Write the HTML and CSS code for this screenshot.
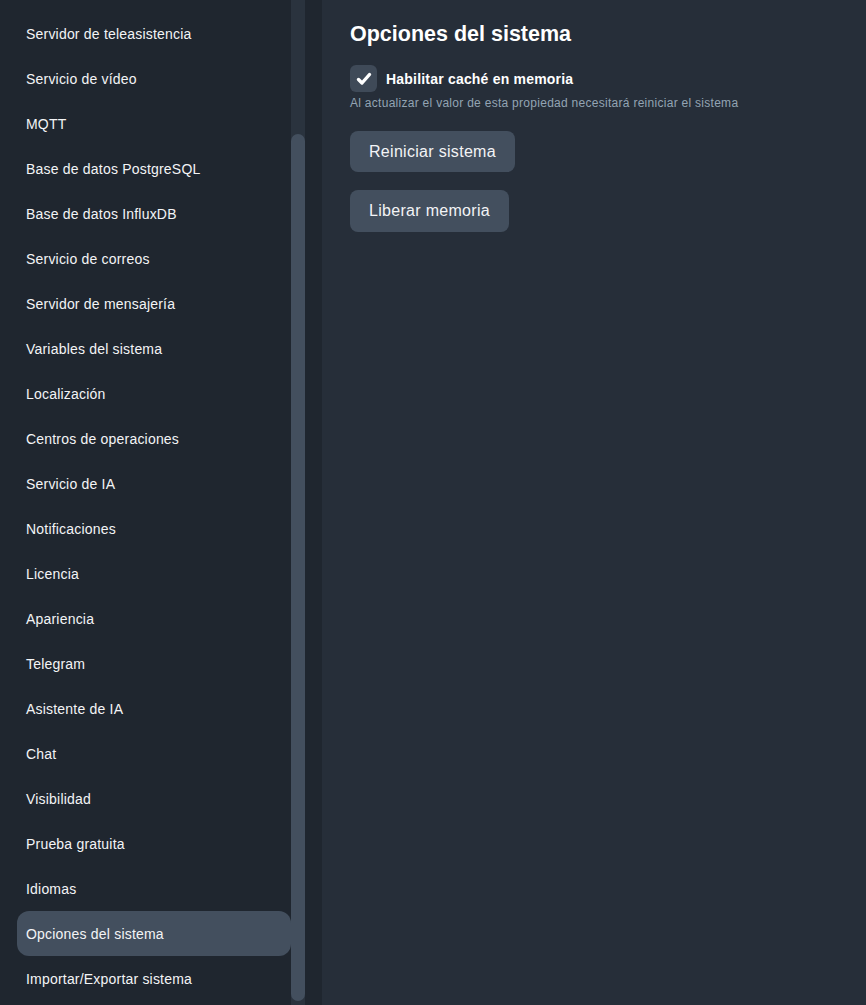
FILE: index.html
```html
<!DOCTYPE html>
<html lang="es">
<head>
<meta charset="utf-8">
<title>Opciones del sistema</title>
<link rel="stylesheet" href="styles.css">
</head>
<body>
<div class="app">
  <aside class="sidebar">
    <nav class="nav">
      <a class="nav-item">Servidor de teleasistencia</a>
      <a class="nav-item">Servicio de vídeo</a>
      <a class="nav-item">MQTT</a>
      <a class="nav-item">Base de datos PostgreSQL</a>
      <a class="nav-item">Base de datos InfluxDB</a>
      <a class="nav-item">Servicio de correos</a>
      <a class="nav-item">Servidor de mensajería</a>
      <a class="nav-item">Variables del sistema</a>
      <a class="nav-item">Localización</a>
      <a class="nav-item">Centros de operaciones</a>
      <a class="nav-item">Servicio de IA</a>
      <a class="nav-item">Notificaciones</a>
      <a class="nav-item">Licencia</a>
      <a class="nav-item">Apariencia</a>
      <a class="nav-item">Telegram</a>
      <a class="nav-item">Asistente de IA</a>
      <a class="nav-item">Chat</a>
      <a class="nav-item">Visibilidad</a>
      <a class="nav-item">Prueba gratuita</a>
      <a class="nav-item">Idiomas</a>
      <a class="nav-item active">Opciones del sistema</a>
      <a class="nav-item">Importar/Exportar sistema</a>
    </nav>
    <div class="scroll-track"><div class="scroll-thumb"></div></div>
  </aside>
  <main class="main">
    <h2 class="title">Opciones del sistema</h2>
    <label class="check-row">
      <span class="checkbox">
        <svg viewBox="0 0 26 26" width="26" height="26"><path d="M7.5 13.5 L11 17 L18.5 8.5" fill="none" stroke="#ffffff" stroke-width="3.4" stroke-linecap="round" stroke-linejoin="round"/></svg>
      </span>
      <span class="check-label">Habilitar caché en memoria</span>
    </label>
    <p class="hint">Al actualizar el valor de esta propiedad necesitará reiniciar el sistema</p>
    <button class="btn btn-first">Reiniciar sistema</button>
    <button class="btn btn-second">Liberar memoria</button>
  </main>
</div>
</body>
</html>
```

FILE: styles.css
```css
html, body {
  margin: 0;
  padding: 0;
  height: 100%;
}
body {
  background: #262e39;
  font-family: "Liberation Sans", Arial, sans-serif;
  color: #f3f4f6;
  overflow: hidden;
}
.app {
  display: flex;
  height: 1005px;
}
.sidebar {
  width: 322px;
  flex: 0 0 322px;
  background: #1f262f;
  display: flex;
  overflow: hidden;
}
.nav {
  width: 274px;
  padding: 11px 0 0 17px;
  display: flex;
  flex-direction: column;
}
.nav-item {
  display: flex;
  align-items: center;
  height: 45px;
  flex: 0 0 45px;
  padding-left: 9px;
  font-size: 14px;
  letter-spacing: 0.2px;
  color: #f3f4f6;
  border-radius: 12px;
  text-decoration: none;
  white-space: nowrap;
}
.nav-item.active {
  background: #434f5e;
}
.scroll-track {
  width: 14px;
  flex: 0 0 14px;
  background: #2a333e;
  padding-top: 134px;
  box-sizing: border-box;
  height: 1005px;
}
.scroll-thumb {
  height: 867px;
  background: #434f5e;
  border-radius: 7px;
}
.main {
  flex: 1;
  padding: 22px 0 0 28px;
  display: flex;
  flex-direction: column;
  align-items: flex-start;
}
.title {
  margin: 0;
  font-size: 21.5px;
  line-height: 24px;
  font-weight: bold;
  color: #ffffff;
}
.check-row {
  display: flex;
  align-items: center;
  margin-top: 19px;
  height: 27px;
}
.checkbox {
  width: 27px;
  height: 27px;
  border-radius: 6px;
  background: #3f4a58;
  display: flex;
  align-items: center;
  justify-content: center;
}
.check-label {
  margin-left: 9px;
  font-size: 14px;
  letter-spacing: 0.2px;
  font-weight: bold;
  color: #ffffff;
}
.hint {
  margin: 3px 0 0 0;
  font-size: 12px;
  letter-spacing: 0.28px;
  line-height: 16px;
  color: #93a4b4;
}
.btn {
  font-family: "Liberation Sans", Arial, sans-serif;
  font-size: 16px;
  letter-spacing: 0.3px;
  color: #f3f4f6;
  background: #434f5e;
  border: none;
  border-radius: 8px;
  padding: 0 19px 0 19px;
  height: 41px;
  cursor: pointer;
}
.btn-first {
  margin-top: 20px;
}
.btn-second {
  margin-top: 18px;
  height: 42px;
}
```
